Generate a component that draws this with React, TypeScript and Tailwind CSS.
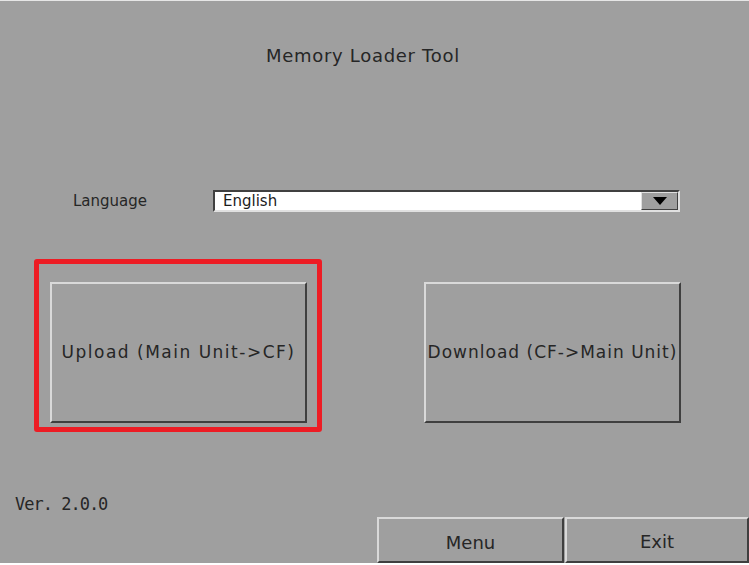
const face = 'bg-[#9f9f9f]';
const bevel =
  'border-2 border-t-[#d9d9d9] border-l-[#d9d9d9] border-b-[#3f3f3f] border-r-[#3f3f3f]';

function Panel({ label, className }: { label: string; className: string }) {
  return (
    <div
      className={`flex items-center justify-center ${face} ${bevel} text-[#262626] ${className}`}
    >
      {label}
    </div>
  );
}

export default function App() {
  return (
    <div
      className={`w-[749px] h-[565px] ${face} flex flex-col border-t border-t-[#e6e6e6] border-b-2 border-b-white`}
      style={{ fontFamily: '"DejaVu Sans", "Noto Sans CJK JP", sans-serif' }}
    >
      {/* ── Title ── */}
      <div className="pt-[44px] pl-[266px] text-[18px] leading-[22px] tracking-[0.7px] text-[#262626]">
        Memory Loader Tool
      </div>

      {/* ── Language selector ── */}
      <div className="mt-[123px] flex items-center h-[22px]">
        <span className="ml-[73px] w-[140px] text-[15px] text-[#262626]">Language</span>
        <div className="w-[467px] h-[22px] flex border-2 border-t-[#404040] border-l-[#404040] border-b-[#e0e0e0] border-r-[#e0e0e0] bg-white">
          <span className="flex-1 pl-[8px] text-[15px] leading-[18px] text-[#1c1c1c]">English</span>
          <div className={`w-[37px] flex items-center justify-center ${face} border border-t-[#e0e0e0] border-l-[#e0e0e0] border-b-[#404040] border-r-[#404040]`}>
            <svg width="14" height="8" viewBox="0 0 14 8">
              <polygon points="0,0 14,0 7,8" fill="#000" />
            </svg>
          </div>
        </div>
      </div>

      {/* ── Transfer buttons ── */}
      <div className="mt-[47px] flex items-start">
        <div className="ml-[34px] border-[5px] border-[#ed1c24] rounded-[3px] pl-[11px] pt-[18px] pr-[10px] pb-[4px]">
          <Panel
            label="Upload (Main Unit->CF)"
            className="w-[257px] h-[141px] text-[17px] tracking-[1.5px]"
          />
        </div>
        <Panel
          label="Download (CF->Main Unit)"
          className="ml-[102px] mt-[23px] w-[257px] h-[141px] text-[17px] tracking-[1px] whitespace-nowrap"
        />
      </div>

      {/* ── Footer ── */}
      <div className="mt-auto flex items-end">
        <span className="ml-[15px] mb-[46px] w-[362px] text-[17px] tracking-[-1px] text-[#262626] font-['DejaVu_Sans_Mono',monospace]">
          Ver. 2.0.0
        </span>
        <Panel label="Menu" className="w-[187px] h-[46px] text-[18px] pt-[4px]" />
        <Panel label="Exit" className="ml-[1px] flex-1 h-[46px] text-[18px] pt-[2px]" />
      </div>
    </div>
  );
}
